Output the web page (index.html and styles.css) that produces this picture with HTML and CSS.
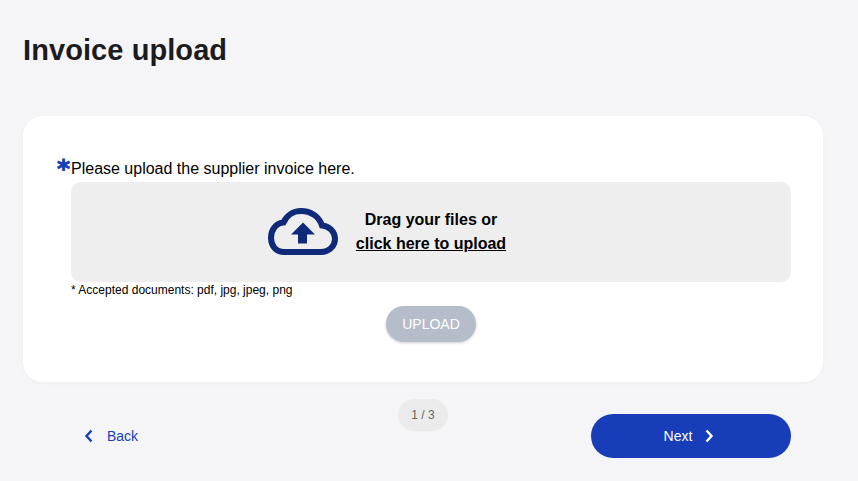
FILE: index.html
```html
<!DOCTYPE html>
<html lang="en">
<head>
  <meta charset="UTF-8" />
  <title>Invoice upload</title>
  <link rel="stylesheet" href="styles.css">
</head>
<body>

  <h1 class="page-title">Invoice upload</h1>

  <div class="card">
    <div class="field-label"><span class="required">*</span><span>Please upload the supplier invoice here.</span></div>

    <div class="field-body">
      <div class="dropzone">
        <svg class="cloud-icon" width="72" height="48" viewBox="0 0 72 48">
          <path d="M17 44H55C63 44 69 38 69 31C69 23.500 63 18 56 17.500C53 8.500 45 3 35 3C27 3 20.500 7.500 17.500 14.500C10 15 5 22 5 29.500C5 38 10 44 17 44Z" fill="none" stroke="#0f2a78" stroke-width="6"/>
          <path d="M37 14.500L49 26.500H41V35.500H32V26.500H25Z" fill="#0f2a78"/>
        </svg>
        <div class="drop-text">
          <div>Drag your files or</div>
          <a class="drop-link" href="#">click here to upload</a>
        </div>
      </div>
      <div class="hint">* Accepted documents: pdf, jpg, jpeg, png</div>
    </div>

    <div class="upload-row">
      <button class="upload-btn" type="button">UPLOAD</button>
    </div>
  </div>

  <div class="footer">
    <a class="back-btn" href="#">
      <svg width="10" height="14" viewBox="0 0 10 14"><path d="M7.500 1.500L2.500 7L7.500 12.500" fill="none" stroke="#173eb8" stroke-width="2.400"/></svg>
      <span>Back</span>
    </a>
    <div class="pager">1 / 3</div>
    <button class="next-btn" type="button">
      <span>Next</span>
      <svg width="10" height="14" viewBox="0 0 10 14"><path d="M2.500 1.500L7.500 7L2.500 12.500" fill="none" stroke="#fff" stroke-width="2.400"/></svg>
    </button>
  </div>

</body>
</html>
```

FILE: styles.css
```css
html, body {
  margin: 0;
  height: 481px;
  overflow: hidden;
}
body {
  background: #f5f5f8;
  font-family: "Liberation Sans", Arial, sans-serif;
  color: #000;
}
.page-title {
  margin: 0;
  padding: 33px 0 0 23px;
  height: 83px;
  font-size: 29px;
  line-height: 35px;
  font-weight: bold;
  letter-spacing: 0.08px;
  color: #1c1c1e;
}
.card {
  box-sizing: border-box;
  width: 800px;
  height: 266px;
  margin-left: 23px;
  padding: 41px 32px 0 34px;
  background: #fff;
  border-radius: 20px;
  box-shadow: 0 1px 4px rgba(0, 0, 0, 0.03);
}
.field-label {
  display: flex;
  height: 25px;
  font-size: 16px;
  line-height: 24px;
}
.required {
  width: 14px;
  color: #173eb8;
  font-family: "DejaVu Sans", sans-serif;
  font-size: 25px;
  font-weight: bold;
  line-height: 24px;
  -webkit-text-stroke: 0.8px #173eb8;
}
.field-body {
  margin-left: 14px;
}
.dropzone {
  display: grid;
  grid-template-columns: 1fr auto 1fr;
  align-items: center;
  column-gap: 18px;
  height: 100px;
  background: #eeeeee;
  border-radius: 10px;
}
.cloud-icon {
  display: block;
  justify-self: end;
}
.drop-text {
  text-align: center;
  white-space: nowrap;
  font-size: 16px;
  font-weight: bold;
  line-height: 24px;
}
.drop-link {
  color: #000;
  text-decoration: underline;
}
.hint {
  font-size: 12px;
  line-height: 16px;
}
.upload-row {
  display: flex;
  justify-content: center;
  margin-top: 8px;
  margin-left: 14px;
}
.upload-btn {
  width: 90px;
  height: 36px;
  border: none;
  border-radius: 18px;
  background: #b5bdca;
  color: #fff;
  font-family: inherit;
  font-size: 14px;
  box-shadow: 0 1px 3px rgba(0, 0, 0, 0.2);
}
.footer {
  position: relative;
  display: flex;
  align-items: center;
  justify-content: space-between;
  height: 44px;
  margin: 32px 67px 0 71px;
}
.back-btn {
  display: flex;
  align-items: center;
  gap: 13px;
  padding-left: 13px;
  color: #173eb8;
  font-size: 14px;
  text-decoration: none;
}
.pager {
  position: absolute;
  left: 327px;
  top: -15px;
  width: 50px;
  height: 32px;
  border-radius: 16px;
  background: #ebebeb;
  color: #666;
  font-size: 12px;
  line-height: 32px;
  text-align: center;
}
.next-btn {
  display: flex;
  align-items: center;
  justify-content: center;
  gap: 12px;
  width: 200px;
  height: 44px;
  padding-right: 10px;
  border: none;
  border-radius: 22px;
  background: #173eb8;
  color: #fff;
  font-family: inherit;
  font-size: 14px;
}
```
